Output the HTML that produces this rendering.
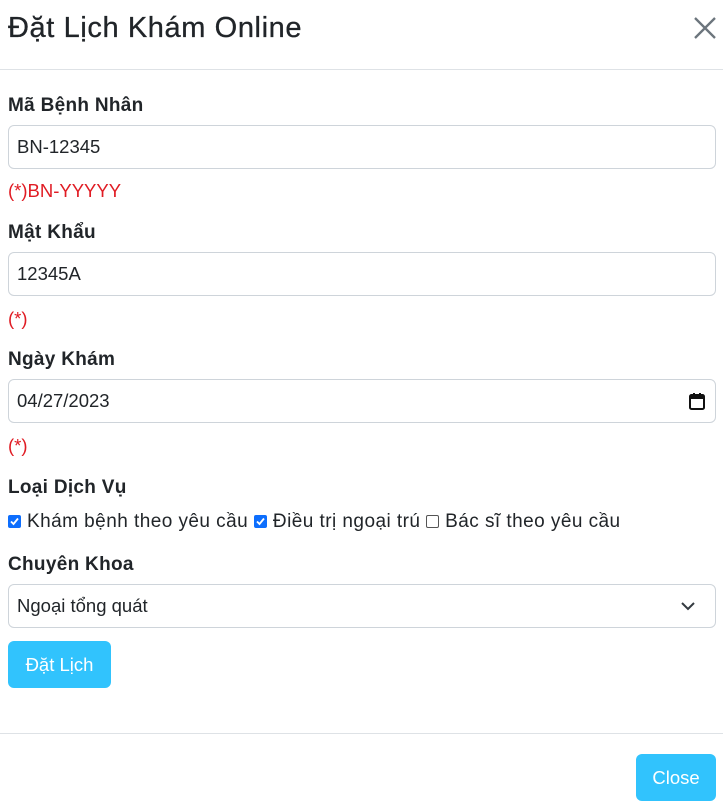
<!DOCTYPE html>
<html><head><meta charset="utf-8"><style>
*{box-sizing:border-box;margin:0;padding:0}
body{width:723px;height:807px;background:#fff;font-family:"Liberation Sans",sans-serif;color:#212529;position:relative;overflow:hidden}
.a{position:absolute;white-space:nowrap}
.t{left:8px;top:10px;font-size:29px;line-height:36px;letter-spacing:.6px;-webkit-text-stroke:.3px #212529}
.x{left:694px;top:17px}
.hr{position:absolute;left:0;width:723px;height:1px;background:#dee2e6}
.lb{left:8px;font-weight:bold;font-size:19px;line-height:22px;letter-spacing:.3px}
.in{position:absolute;left:8px;width:708px;height:44px;border:1px solid #ced4da;border-radius:6px;font-size:18.5px;line-height:42px;padding-left:8px}
.r{left:8px;color:#e01c24;font-size:18.5px;line-height:22px}
.btn{position:absolute;background:#31c3fd;color:#fff;border-radius:6px;font-size:18.5px;text-align:center;line-height:47px;height:47px}
.cb{display:inline-block;width:13px;height:13px;border-radius:2px;vertical-align:-1px;margin-right:6px;position:relative}
</style></head><body>
<div class="a t">Đặt Lịch Khám Online</div>
<svg class="a x" width="22" height="22" viewBox="0 0 22 22"><path d="M1 1L21 21M21 1L1 21" stroke="#6c757d" stroke-width="2.3"/></svg>
<div class="hr" style="top:69px"></div>
<div class="a lb" style="top:95px">Mã Bệnh Nhân</div>
<div class="in" style="top:125px">BN-12345</div>
<div class="a r" style="top:180px">(*)BN-YYYYY</div>
<div class="a lb" style="top:222px">Mật Khẩu</div>
<div class="in" style="top:252px">12345A</div>
<div class="a r" style="top:308px">(*)</div>
<div class="a lb" style="top:349px">Ngày Khám</div>
<div class="in" style="top:379px">04/27/2023
<svg style="position:absolute;right:10px;top:13px" width="16" height="17" viewBox="0 0 16 17"><rect x="1" y="2" width="14" height="14" rx="1.5" fill="none" stroke="#111" stroke-width="2"/><rect x="1" y="2" width="14" height="4" fill="#111"/><rect x="4" y="0" width="2" height="3" fill="#111"/><rect x="10" y="0" width="2" height="3" fill="#111"/></svg></div>
<div class="a r" style="top:435px">(*)</div>
<div class="a lb" style="top:477px">Loại Dịch Vụ</div>
<div class="a" style="left:8px;top:511px;font-size:19px;line-height:22px;letter-spacing:.45px">
<span class="cb" style="background:#0d6efd"><svg style="position:absolute;left:2px;top:2px" width="9" height="9" viewBox="0 0 9 9"><path d="M1 4.5L3.5 7L8 1.5" stroke="#fff" stroke-width="1.8" fill="none"/></svg></span>Khám bệnh theo yêu cầu <span class="cb" style="background:#0d6efd"><svg style="position:absolute;left:2px;top:2px" width="9" height="9" viewBox="0 0 9 9"><path d="M1 4.5L3.5 7L8 1.5" stroke="#fff" stroke-width="1.8" fill="none"/></svg></span>Điều trị ngoại trú <span class="cb" style="border:1px solid #555"></span>Bác sĩ theo yêu cầu</div>
<div class="a lb" style="top:554px">Chuyên Khoa</div>
<div class="in" style="top:584px">Ngoại tổng quát
<svg style="position:absolute;right:20px;top:16px" width="14" height="10" viewBox="0 0 14 10"><path d="M1 2L7 8L13 2" stroke="#343a40" stroke-width="2" fill="none"/></svg></div>
<div class="btn" style="left:8px;top:641px;width:103px">Đặt Lịch</div>
<div class="hr" style="top:733px"></div>
<div class="btn" style="left:636px;top:754px;width:80px">Close</div>
</body></html>
